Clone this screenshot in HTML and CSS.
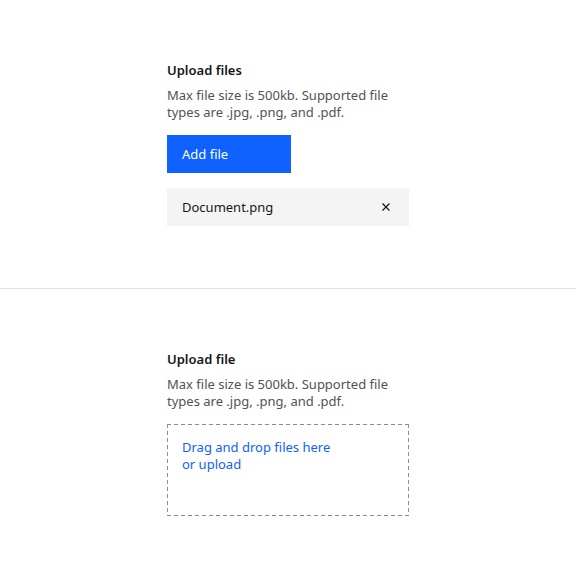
FILE: index.html
```html
<!DOCTYPE html>
<html lang="en">
<head>
<meta charset="utf-8">
<title>File uploader</title>
<link rel="stylesheet" href="styles.css">
</head>
<body>
<main class="page">
  <section class="panel panel-top">
    <div class="uploader">
      <p class="title">Upload files</p>
      <p class="desc">Max file size is 500kb. Supported file types are .jpg, .png, and .pdf.</p>
      <button class="btn" type="button">Add file</button>
      <div class="file-item">
        <span class="file-name">Document.png</span>
        <span class="file-remove" aria-label="Remove file">
          <svg width="16" height="16" viewBox="0 0 16 16"><path d="M4.5 4.5l7 7M11.5 4.5l-7 7" stroke="#161616" stroke-width="1.2" fill="none"/></svg>
        </span>
      </div>
    </div>
  </section>
  <section class="panel panel-bottom">
    <div class="uploader">
      <p class="title">Upload file</p>
      <p class="desc">Max file size is 500kb. Supported file types are .jpg, .png, and .pdf.</p>
      <div class="dropzone">
        <span class="drop-text">Drag and drop files here or upload</span>
      </div>
    </div>
  </section>
</main>
</body>
</html>
```
FILE: styles.css
```css
* { box-sizing: border-box; }
html, body { margin: 0; padding: 0; background: #ffffff; }
body { font-family: "Noto Sans", "Open Sans", sans-serif; color: #161616; }
.page { display: flex; flex-direction: column; width: 576px; height: 576px; }
.panel { display: flex; align-items: center; justify-content: center; }
.panel-top { height: 289px; border-bottom: 1px solid #e0e0e0; }
.panel-bottom { height: 287px; padding-top: 1px; }
.uploader { width: 242px; display: flex; flex-direction: column; align-items: flex-start; }
.title { margin: 0; font-size: 13px; line-height: 17px; font-weight: 600; color: #161616; }
.desc { margin: 8px 0 0; font-size: 13px; line-height: 17px; color: #525252; width: 236px; }
.btn { margin-top: 14px; width: 124px; height: 38px; border: none; background: #0f62fe; color: #ffffff; font: inherit; font-size: 13px; text-align: left; padding: 0 15px; }
.file-item { margin-top: 15px; width: 242px; height: 38px; background: #f4f4f4; display: flex; align-items: center; justify-content: space-between; padding: 0 15px; font-size: 13px; }
.file-remove { display: flex; width: 16px; height: 16px; }
.dropzone {
  margin-top: 14px; width: 242px; height: 92px; padding: 15px 15px 0 15px;
  background:
    repeating-linear-gradient(90deg, #8d8d8d 0 4px, transparent 4px 7px) left top / 100% 1px no-repeat,
    repeating-linear-gradient(90deg, #8d8d8d 0 4px, transparent 4px 7px) left bottom / 100% 1px no-repeat,
    repeating-linear-gradient(180deg, #8d8d8d 0 4px, transparent 4px 7px) left top / 1px 100% no-repeat,
    repeating-linear-gradient(180deg, #8d8d8d 0 4px, transparent 4px 7px) right top / 1px 100% no-repeat;
}
.drop-text { display: block; max-width: 160px; font-size: 13px; line-height: 17px; color: #0f62fe; }
```
